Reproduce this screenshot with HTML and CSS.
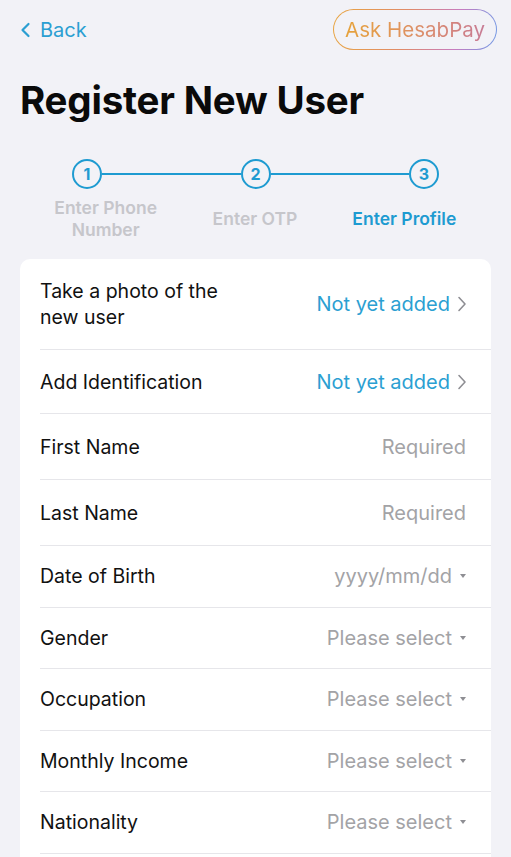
FILE: index.html
```html
<!DOCTYPE html>
<html lang="en">
<head>
    <meta charset="UTF-8">
    <title>Register New User</title>
    <meta name="viewport" content="width=device-width, initial-scale=1.0">
    <link rel="stylesheet" href="styles.css">
</head>
<body>
    <!-- Top bar -->
    <div class="topbar">
        <a class="back" href="#">
            <svg class="back-icon" width="11" height="16" viewBox="0 0 11 16"><path d="M8.5 2 L2.5 8 L8.5 14" fill="none" stroke="#2b9fd2" stroke-width="2.2" stroke-linecap="round" stroke-linejoin="round"/></svg>
            Back
        </a>
        <button class="ask-btn"><span class="ask-text">Ask HesabPay</span></button>
    </div>

    <h1 class="title">Register New User</h1>

    <!-- Stepper -->
    <div class="stepper">
        <div class="step-dots">
            <div class="dot">1</div>
            <div class="line"></div>
            <div class="dot">2</div>
            <div class="line"></div>
            <div class="dot">3</div>
        </div>
        <div class="step-labels">
            <div class="step-label">Enter Phone<br>Number</div>
            <div class="step-label">Enter OTP</div>
            <div class="step-label active">Enter Profile</div>
        </div>
    </div>

    <!-- Form card -->
    <div class="card">
        <div class="row row-tall">
            <div class="label">Take a photo of the<br>new user</div>
            <div class="value link">Not yet added <svg class="chev" width="10" height="18" viewBox="0 0 10 18"><path d="M2 2.5 L8 9 L2 15.5" fill="none" stroke="#8e8e93" stroke-width="1.6" stroke-linecap="round" stroke-linejoin="round"/></svg></div>
        </div>
        <div class="row row-lg">
            <div class="label">Add Identification</div>
            <div class="value link">Not yet added <svg class="chev" width="10" height="18" viewBox="0 0 10 18"><path d="M2 2.5 L8 9 L2 15.5" fill="none" stroke="#8e8e93" stroke-width="1.6" stroke-linecap="round" stroke-linejoin="round"/></svg></div>
        </div>
        <div class="row row-xl">
            <div class="label">First Name</div>
            <div class="value">Required</div>
        </div>
        <div class="row row-xl">
            <div class="label">Last Name</div>
            <div class="value">Required</div>
        </div>
        <div class="row">
            <div class="label">Date of Birth</div>
            <div class="value">yyyy/mm/dd <span class="caret"></span></div>
        </div>
        <div class="row">
            <div class="label">Gender</div>
            <div class="value">Please select <span class="caret"></span></div>
        </div>
        <div class="row">
            <div class="label">Occupation</div>
            <div class="value">Please select <span class="caret"></span></div>
        </div>
        <div class="row">
            <div class="label">Monthly Income</div>
            <div class="value">Please select <span class="caret"></span></div>
        </div>
        <div class="row">
            <div class="label">Nationality</div>
            <div class="value">Please select <span class="caret"></span></div>
        </div>
    </div>
</body>
</html>
```

FILE: styles.css
```css
/* Reset */
* {
    margin: 0;
    padding: 0;
    box-sizing: border-box;
}

body {
    background-color: #f2f2f7;
    font-family: Inter, "Noto Sans", sans-serif;
    color: #111;
    overflow: hidden;
}

/* Top bar */
.topbar {
    display: flex;
    justify-content: space-between;
    align-items: center;
    padding: 9px 14px 0 20px;
}

.back {
    display: flex;
    align-items: center;
    gap: 9px;
    color: #2b9fd2;
    font-size: 20px;
    text-decoration: none;
}

.ask-btn {
    height: 41px;
    padding: 0 11px;
    border: 1.5px solid transparent;
    border-radius: 21px;
    background:
        linear-gradient(#f2f2f7, #f2f2f7) padding-box,
        linear-gradient(100deg, #e9a640 0%, #e08a6a 45%, #c77cc0 75%, #6e9ae6 100%) border-box;
    font-family: inherit;
    font-size: 20.5px;
}

.ask-text {
    background: linear-gradient(90deg, #e6a23a 0%, #e0945c 40%, #d4847c 75%, #c77b95 100%);
    -webkit-background-clip: text;
    background-clip: text;
    color: transparent;
}

/* Title */
.title {
    padding: 27px 20px 0;
    font-size: 38.5px;
    font-weight: 700;
    letter-spacing: -0.2px;
    color: #0a0a0a;
}

/* Stepper */
.stepper {
    padding-top: 36px;
}

.step-dots {
    display: flex;
    align-items: center;
    padding: 0 72px;
}

.dot {
    width: 30px;
    height: 30px;
    border: 2.5px solid #1e9bd1;
    border-radius: 50%;
    display: flex;
    align-items: center;
    justify-content: center;
    font-size: 16px;
    font-weight: 700;
    color: #1e9bd1;
    background-color: #f2f2f7;
}

.line {
    flex: 1;
    height: 2px;
    background-color: #1e9bd1;
}

.step-labels {
    display: grid;
    grid-template-columns: repeat(3, 1fr);
    align-items: center;
    padding: 8px 32px 0 31px;
}

.step-label {
    text-align: center;
    font-size: 17.5px;
    font-weight: 600;
    line-height: 22px;
    color: #c6c6cb;
}

.step-label.active {
    color: #1e9bd1;
}

/* Card */
.card {
    margin: 18px 20px 0;
    padding-bottom: 20px;
    background-color: #fff;
    border-radius: 10px;
}

.row {
    display: flex;
    justify-content: space-between;
    align-items: center;
    min-height: 61.5px;
    margin-left: 20px;
    padding-right: 25px;
    border-bottom: 1.5px solid #e6e6ea;
}

.row-tall {
    min-height: 91px;
}

.row-lg {
    min-height: 64px;
}

.row-xl {
    min-height: 66px;
}

.label {
    font-size: 19.5px;
    line-height: 26px;
    color: #111;
}

.value {
    display: flex;
    align-items: center;
    gap: 6px;
    font-size: 20px;
    color: #a3a3a6;
}

.value.link {
    color: #2b9fd2;
    gap: 7px;
}

.chev {
    margin-right: -1px;
}

.caret {
    width: 0;
    height: 0;
    border-left: 3.5px solid transparent;
    border-right: 3.5px solid transparent;
    border-top: 4px solid #8e8e93;
    margin-left: 2px;
}
```
